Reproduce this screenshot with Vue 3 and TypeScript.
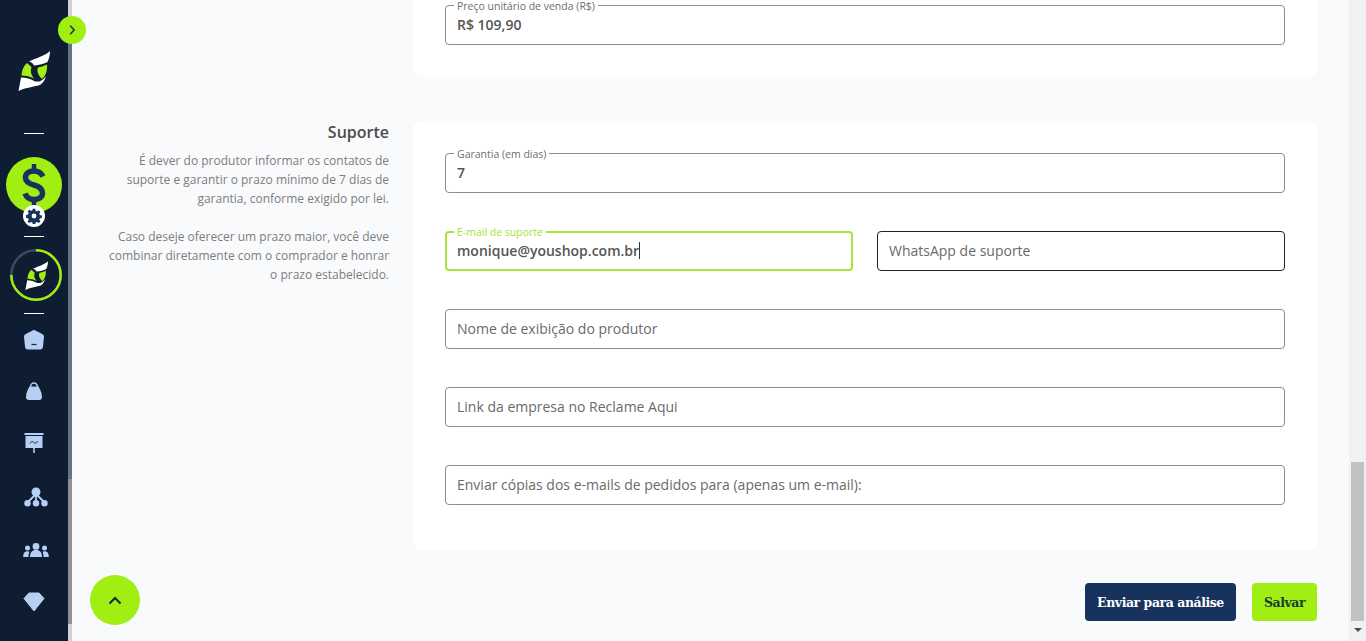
<script setup lang="ts">
interface Field { label: string }
const lines1 = ['É dever do produtor informar os contatos de', 'suporte e garantir o prazo mínimo de 7 dias de', 'garantia, conforme exigido por lei.']
const lines2 = ['Caso deseje oferecer um prazo maior, você deve', 'combinar diretamente com o comprador e honrar', 'o prazo estabelecido.']
const wideFields: Field[] = [
  { label: 'Nome de exibição do produtor' },
  { label: 'Link da empresa no Reclame Aqui' },
  { label: 'Enviar cópias dos e-mails de pedidos para (apenas um e-mail):' }
]
const logoParts = [
  { d: 'M32 0C27 5 18 7 11 10.500C14 11.500 15.500 13 16 14.500C21 14 26 13 29.500 11C31 8 32 4 32 0Z', fill: '#fff' },
  { d: 'M9 12C5.500 15 3.500 20 3.500 24.500C8 24.500 12 25.500 16 27.500C13 24 12 20 13.500 16Z', fill: '#a0ee12' },
  { d: 'M29 13.500C26 15 22.500 16 20 16.500C18.500 20 20 24 24 28C27.500 25 29.500 20 29 13.500Z', fill: '#a0ee12' },
  { d: 'M.5 40L3 26.500C8 26.500 13 28 17 30.500L21.500 30.500C24 29.500 26.500 27.500 28 25C27 29 25 32 22 34C15 36 6 37 .5 40Z', fill: '#fff' }
]
</script>

<template>
  <div class="page">
    <aside class="rail">
      <button class="toggle" aria-label="Expandir">
        <svg width="12" height="12" viewBox="0 0 12 12"><path d="M4.200 1.800 8.200 6l-4 4.200" fill="none" stroke="#14243c" stroke-width="1.300" /></svg>
      </button>
      <svg class="logo" width="32" height="40" viewBox="0 0 32 40">
        <path v-for="p in logoParts" :key="p.d" :d="p.d" :fill="p.fill" />
      </svg>
      <hr class="sep sep-a" />
      <div class="money">
        <svg width="24" height="44" viewBox="0 0 24 44">
          <path d="M21 13.500C19 9.500 16 8 12 8C7 8 3.500 10.500 3.500 14.500C3.500 18.500 6.500 20.500 12 22C17.500 23.500 20.500 25.500 20.500 30C20.500 34 17 36.500 12 36.500C8 36.500 4.500 34.500 3 30.500" fill="none" stroke="#17325c" stroke-width="5.500" />
          <path d="M12 1v7M12 36v7" fill="none" stroke="#17325c" stroke-width="4.500" />
        </svg>
        <span class="gear">
          <svg width="16" height="16" viewBox="0 0 16 16">
            <path d="M6.800.8h2.400l.4 2 1.400.6 1.700-1.100 1.700 1.700-1.100 1.700.6 1.400 2 .4v2.400l-2 .4-.6 1.400 1.100 1.700-1.700 1.700-1.700-1.100-1.400.6-.4 2H6.800l-.4-2-1.400-.6-1.700 1.100-1.700-1.700 1.100-1.700-.6-1.400-2-.4V6.900l2-.4.6-1.400-1.100-1.700 1.700-1.700 1.700 1.100 1.400-.6Z" fill="#17325c" />
            <circle cx="8" cy="8" r="2.400" fill="#fff" />
          </svg>
        </span>
      </div>
      <hr class="sep sep-b" />
      <div class="ring">
        <svg class="ring-art" width="52" height="52" viewBox="0 0 52 52">
          <circle cx="26" cy="26" r="24.700" fill="none" stroke="#3d4a5c" stroke-width="2.500" />
          <path d="M26 1.300A24.700 24.700 0 1 1 1.300 26" fill="none" stroke="#a0ee12" stroke-width="2.500" />
        </svg>
        <svg class="ring-logo" width="23" height="29" viewBox="0 0 32 40">
          <path v-for="p in logoParts" :key="p.d" :d="p.d" :fill="p.fill" />
        </svg>
      </div>
      <hr class="sep sep-c" />
      <nav class="nav">
        <svg class="ico" width="22" height="22" viewBox="0 0 22 22"><path d="M11 1Q12 1 20 5.500Q21 6 21 8L20 17.500Q19.800 20.500 17 20.500H5Q2.200 20.500 2 17.500L1 8Q1 6 2 5.500Q10 1 11 1Z" fill="#b5d0f3" /><path d="M8.500 15.500h5" stroke="#14243c" stroke-width="1.200" /></svg>
        <svg class="ico" width="18" height="20" viewBox="0 0 18 20"><path d="M5.500 6a3.500 4 0 0 1 7 0" fill="none" stroke="#b5d0f3" stroke-width="1.500" /><path d="M4.500 5.500h9C15 8 17 12 17 16a3 3 0 0 1-3 3H4a3 3 0 0 1-3-3c0-4 2-8 3.500-10.500Z" fill="#b5d0f3" /></svg>
        <svg class="ico" width="22" height="22" viewBox="0 0 22 22"><path d="M1.500 1h19v2h-19Z" fill="#b5d0f3" /><path d="M2.500 4h17v12h-17Z" fill="#b5d0f3" /><path d="M10.200 16h1.600v5h-1.600Z" fill="#b5d0f3" /><path d="M7 11.500c1.500-2.500 2.500-2 4-1s2.500 1 4-1.500" fill="none" stroke="#14243c" stroke-width="1" /></svg>
        <svg class="ico" width="24" height="20" viewBox="0 0 24 20"><circle cx="12" cy="5" r="4.500" fill="#b5d0f3" /><circle cx="3.500" cy="16.200" r="3.200" fill="#b5d0f3" /><circle cx="12" cy="16.200" r="3.200" fill="#b5d0f3" /><circle cx="20.500" cy="16.200" r="3.200" fill="#b5d0f3" /><path d="M12 8v7M11 8l-7 7M13 8l7 7" stroke="#b5d0f3" stroke-width="1.800" /></svg>
        <svg class="ico" width="26" height="14" viewBox="0 0 26 14"><circle cx="13" cy="3.400" r="3.400" fill="#b5d0f3" /><circle cx="4.500" cy="5" r="2.500" fill="#b5d0f3" /><circle cx="21.500" cy="5" r="2.500" fill="#b5d0f3" /><path d="M7 14c0-4.500 2-7 6-7s6 2.500 6 7ZM.2 14c0-3.500 1-5.800 4.300-5.800 1 0 1.500.2 2 .5-.7 1-1 3-1 5.300ZM25.800 14c0-3.500-1-5.800-4.300-5.800-1 0-1.500.2-2 .5.7 1 1 3 1 5.300Z" fill="#b5d0f3" /></svg>
        <svg class="ico" width="22" height="20" viewBox="0 0 22 20"><path d="M6 1h10l5 5.500L11 19 1 6.500Z" fill="#b5d0f3" stroke="#b5d0f3" stroke-width="1" stroke-linejoin="round" /></svg>
      </nav>
    </aside>
    <div class="rail-bar"><span class="rail-top"></span><span class="rail-thumb-a"></span><span class="rail-thumb-b"></span><span class="rail-thumb-c"></span></div>

    <main class="main">
      <div class="row first-row">
        <div class="side"></div>
        <section class="card top-card">
          <div class="field filled">
            <label>Preço unitário de venda (R$)</label>
            <span class="val">R$ 109,90</span>
          </div>
        </section>
      </div>

      <div class="row">
        <div class="side">
          <h2>Suporte</h2>
          <p><span v-for="l in lines1" :key="l">{{ l }}<br /></span></p>
          <p><span v-for="l in lines2" :key="l">{{ l }}<br /></span></p>
        </div>
        <section class="card form-card">
          <div class="field filled">
            <label>Garantia (em dias)</label>
            <span class="val">7</span>
          </div>
          <div class="two">
            <div class="field filled focus">
              <label>E-mail de suporte</label>
              <span class="val">monique@youshop.com.br<i class="caret"></i></span>
            </div>
            <div class="field dark"><span class="ph">WhatsApp de suporte</span></div>
          </div>
          <div v-for="f in wideFields" :key="f.label" class="field"><span class="ph">{{ f.label }}</span></div>
        </section>
      </div>

      <div class="actions">
        <button class="btn navy">Enviar para análise</button>
        <button class="btn lime">Salvar</button>
      </div>

      <button class="up" aria-label="Topo">
        <svg width="14" height="9" viewBox="0 0 14 9"><path d="M1.500 7.500 7 2l5.500 5.500" fill="none" stroke="#14243c" stroke-width="2" /></svg>
      </button>
    </main>

    <div class="scroll">
      <span class="up-arrow"></span>
      <span class="track"></span>
      <span class="thumb"></span>
      <span class="down-arrow"></span>
    </div>
  </div>
</template>

<style>
html, body { margin: 0; overflow: hidden; }
</style>

<style scoped>
.page { display: flex; width: 1366px; height: 641px; overflow: hidden; background: #f9fafc; font-family: "Open Sans", sans-serif; position: relative; }
.rail { width: 68px; flex: none; background: #0f1d33; display: flex; flex-direction: column; align-items: center; }
.rail-bar { width: 4px; flex: none; display: flex; flex-direction: column; }
.rail-top { height: 30px; background: #d2d2d2; }
.rail-thumb-a { height: 449px; background: #66728a; }
.rail-thumb-b { height: 145px; background: #8f9092; }
.rail-thumb-c { height: 17px; background: #d2d2d2; }
.toggle { position: absolute; left: 58px; top: 16px; width: 28px; height: 28px; border: 0; border-radius: 50%; background: #a0ee12; display: flex; align-items: center; justify-content: center; padding: 0; }
.logo { margin-top: 51px; flex: none; }
.sep { width: 20px; height: 1px; border: 0; margin: 0; background: #fff; flex: none; }
.sep-a { margin-top: 42px; }
.money { position: relative; width: 56px; height: 56px; border-radius: 50%; background: #a0ee12; margin-top: 23px; flex: none; display: flex; align-items: center; justify-content: center; }
.gear { position: absolute; left: 17px; top: 48px; width: 22px; height: 22px; border-radius: 50%; background: #fff; display: flex; align-items: center; justify-content: center; }
.sep-b { margin-top: 23px; }
.ring { position: relative; width: 52px; height: 52px; margin-top: 12px; margin-left: 4px; flex: none; display: flex; align-items: center; justify-content: center; }
.ring-art { position: absolute; inset: 0; }
.sep-c { margin-top: 12px; }
.nav { display: flex; flex-direction: column; align-items: center; margin-top: 15px; }
.ico { flex: none; }
.nav .ico:nth-child(2) { margin-top: 30px; }
.nav .ico:nth-child(3) { margin-top: 31px; }
.nav .ico:nth-child(4) { margin-top: 33px; margin-left: 4px; }
.nav .ico:nth-child(5) { margin-top: 36px; margin-left: 4px; }
.nav .ico:nth-child(6) { margin-top: 35px; }
.main { flex: 1; min-width: 0; position: relative; display: flex; flex-direction: column; padding-right: 32px; }
.row { display: flex; gap: 24px; margin-left: 37px; }
.first-row { margin-bottom: 44px; }
.side { width: 280px; flex: none; text-align: right; color: #7d7d7d; font-size: 12px; line-height: 19px; white-space: nowrap; }
.side h2 { margin: 0 0 8px; font-size: 16px; line-height: 22px; font-weight: 600; color: #4b4b4b; }
.side p { margin: 0 0 19px; }
.card { flex: 1; background: #fff; border-radius: 8px; padding: 0 32px; display: flex; flex-direction: column; box-sizing: border-box; }
.top-card { height: 77px; padding-top: 5px; border-radius: 0 0 8px 8px; }
.form-card { height: 429px; padding-top: 32px; gap: 38px; }
.two { display: flex; gap: 24px; }
.two .field { flex: 1; }
.field { position: relative; height: 40px; box-sizing: border-box; border: 1px solid #8d8d8d; border-radius: 4px; display: flex; align-items: center; padding: 0 11px 2px; font-size: 14px; color: #555; background: #fff; }
.field.dark { border-color: #222; }
.field.focus { border: 2px solid #a9e33b; padding: 0 10px 2px; }
.field label { position: absolute; left: 8px; top: -5px; padding: 0 3px; background: #fff; font-size: 10.500px; line-height: 11px; color: #6e6e6e; white-space: nowrap; }
.field.focus label { left: 7px; top: -6px; color: #a4e32f; }
.field.filled .val { font-weight: 600; color: #555; }
.ph { color: #6a6a6a; }
.caret { display: inline-block; width: 1px; height: 17px; background: #333; vertical-align: -3px; }
.actions { display: flex; justify-content: flex-end; gap: 16px; margin-top: 33px; }
.btn { height: 38px; border: 0; border-radius: 4px; font: 700 12.500px "DejaVu Serif", serif; letter-spacing: -0.45px; }
.navy { width: 151px; background: #17325c; color: #fff; }
.lime { width: 65px; background: #a0ee12; color: #17403a; }
.up { position: absolute; left: 18px; top: 575px; width: 50px; height: 50px; border-radius: 50%; border: 0; background: #a0ee12; display: flex; align-items: center; justify-content: center; padding: 0; }
.scroll { width: 17px; flex: none; background: #f1f1f1; display: flex; flex-direction: column; align-items: center; }
.track { height: 445px; flex: none; }
.up-arrow { height: 17px; flex: none; }
.thumb { width: 13px; height: 159px; flex: none; background: #c1c1c1; }
.down-arrow { height: 0; width: 0; margin-top: 7px; border-left: 4px solid transparent; border-right: 4px solid transparent; border-top: 4px solid #505050; flex: none; }
</style>
